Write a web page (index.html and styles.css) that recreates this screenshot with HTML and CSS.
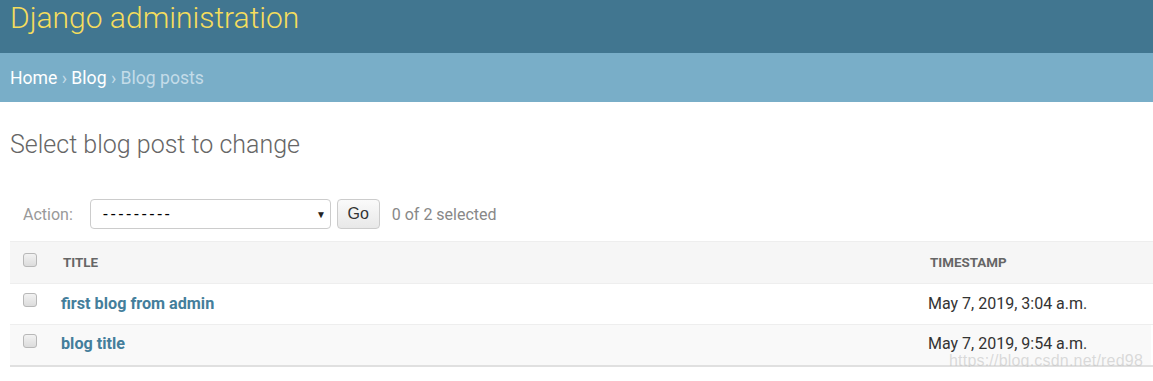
FILE: index.html
```html
<!DOCTYPE html>
<html>
<head>
<meta charset="utf-8">
<link rel="stylesheet" href="styles.css">
</head>
<body>
<div class="header"><h1 class="branding">Django administration</h1></div>
<div class="breadcrumbs"><a href="#">Home</a> › <a href="#">Blog</a> › <span class="current">Blog posts</span></div>
<div class="content">
  <h1 class="page-title">Select blog post to change</h1>
  <div class="actions">
    <label class="action-label">Action:</label>
    <div class="select"><span class="dashes">---------</span><span class="arrow">▼</span></div>
    <button class="go">Go</button>
    <span class="counter">0 of 2 selected</span>
  </div>
  <table class="result-list">
    <thead>
      <tr>
        <th class="check"><span class="cb"></span></th>
        <th class="col-title">Title</th>
        <th class="col-ts">Timestamp</th>
      </tr>
    </thead>
    <tbody>
      <tr>
        <td class="check"><span class="cb"></span></td>
        <td class="col-title"><a href="#">first blog from admin</a></td>
        <td class="col-ts">May 7, 2019, 3:04 a.m.</td>
      </tr>
      <tr class="alt">
        <td class="check"><span class="cb"></span></td>
        <td class="col-title"><a href="#">blog title</a></td>
        <td class="col-ts">May 7, 2019, 9:54 a.m.</td>
      </tr>
    </tbody>
  </table>
  <div class="watermark">https://blog.csdn.net/red98</div>
</div>
</body>
</html>
```

FILE: styles.css
```css
html, body {
  margin: 0;
  padding: 0;
  background: #fff;
  font-family: Roboto, "Liberation Sans", sans-serif;
  color: #333;
}
.header {
  background: #417690;
  height: 53px;
  padding: 0 10px;
  box-sizing: border-box;
}
.branding {
  margin: 0;
  font-size: 30px;
  font-weight: 300;
  line-height: 36px;
  color: #f5dd5d;
}
.breadcrumbs {
  background: #79aec8;
  height: 49px;
  box-sizing: border-box;
  padding: 15px 10px 0;
  font-size: 17.6px;
  line-height: 21px;
  color: #c4dce8;
}
.breadcrumbs a {
  color: #fff;
  text-decoration: none;
}
.breadcrumbs .current {
  color: #c4dce8;
}
.content {
  padding: 0 0 0 10px;
  position: relative;
}
.page-title {
  margin: 0;
  padding-top: 28px;
  font-size: 25px;
  line-height: 30px;
  font-weight: 300;
  color: #666;
}
.actions {
  display: flex;
  align-items: center;
  margin-top: 39px;
  height: 30px;
  padding-left: 13px;
  font-size: 16px;
  color: #999;
}
.action-label {
  color: #999;
  margin-right: 17px;
}
.select {
  width: 241px;
  height: 30px;
  box-sizing: border-box;
  border: 1px solid #ccc;
  border-radius: 4px;
  display: flex;
  align-items: center;
  justify-content: space-between;
  padding: 0 4px 0 12px;
  color: #000;
  font-family: "Liberation Sans", Arial, sans-serif;
  font-size: 16px;
}
.dashes {
  letter-spacing: 2.4px;
}
.arrow {
  font-size: 10px;
  color: #222;
}
.go {
  margin-left: 6px;
  width: 43px;
  height: 30px;
  border: 1px solid #ccc;
  border-radius: 4px;
  background: linear-gradient(#fafafa, #e8e8e8);
  font-family: "Liberation Sans", Arial, sans-serif;
  font-size: 16px;
  color: #333;
  padding: 0;
}
.counter {
  margin-left: 12px;
  color: #888;
  font-size: 16px;
}
.result-list {
  margin-top: 12px;
  width: 100%;
  border-collapse: collapse;
}
.result-list th, .result-list td {
  text-align: left;
  padding: 0;
  vertical-align: middle;
}
.result-list thead tr {
  background: #f6f6f6;
  height: 42px;
  border-top: 1px solid #eee;
  border-bottom: 1px solid #eee;
}
.result-list thead th {
  font-size: 13.4px;
  font-weight: 700;
  text-transform: uppercase;
  color: #666;
}
.result-list tbody tr {
  height: 41px;
  border-bottom: 1px solid #eee;
}
.result-list tbody tr.alt {
  background: #f9f9f9;
}
.result-list tbody tr:last-child {
  border-bottom: 2px solid #e0e0e0;
}
.result-list tbody td {
  padding-bottom: 2px;
}
.check {
  width: 51px;
  padding-left: 13px !important;
  box-sizing: border-box;
}
.cb {
  display: block;
  width: 12px;
  height: 12px;
  border: 1px solid #b8b8b8;
  border-radius: 3px;
  background: linear-gradient(#f2f2f2, #dcdcdc);
  margin-top: -6px;
}
.result-list thead .col-title {
  padding-left: 2px;
}
.col-title {
  width: 867px;
}
.col-title a {
  color: #447e9b;
  font-weight: 700;
  font-size: 16.2px;
  text-decoration: none;
}
.result-list td.col-ts {
  font-size: 16px;
  color: #333;
  padding-left: 0;
  position: relative;
  left: -2px;
}
.watermark {
  position: absolute;
  right: 10px;
  bottom: -3px;
  font-family: "Liberation Sans", Arial, sans-serif;
  font-size: 16px;
  letter-spacing: 0.2px;
  color: rgba(190, 190, 190, 0.55);
}
```
